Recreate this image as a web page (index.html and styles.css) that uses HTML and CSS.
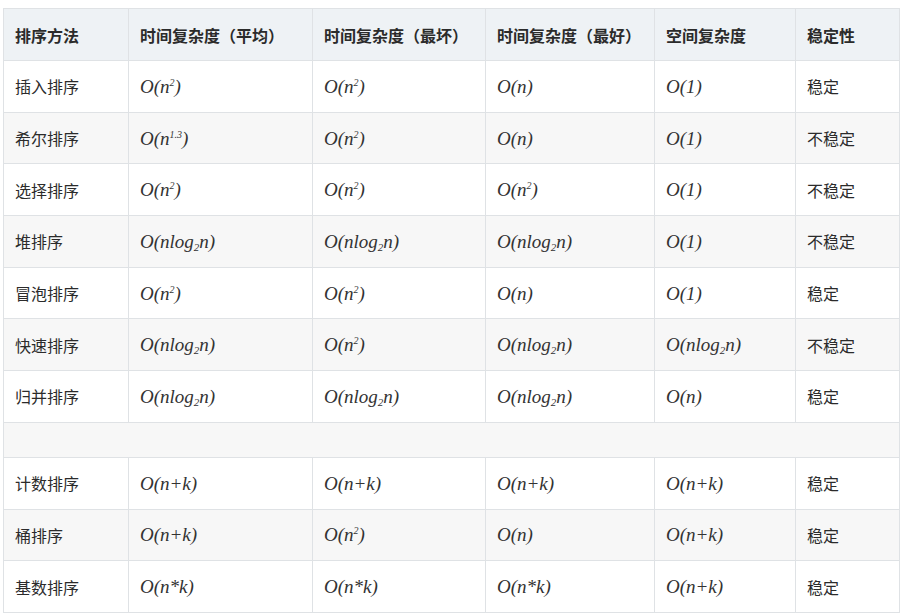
FILE: index.html
```html
<!DOCTYPE html>
<html lang="zh">
<head>
<meta charset="utf-8">
<link rel="stylesheet" href="styles.css">
</head>
<body>
<div class="page">
<table class="sort-table">
  <colgroup>
    <col class="c1"><col class="c2"><col class="c3"><col class="c4"><col class="c5"><col class="c6">
  </colgroup>
  <thead>
    <tr><th>排序方法</th><th>时间复杂度（平均）</th><th>时间复杂度（最坏）</th><th>时间复杂度（最好）</th><th>空间复杂度</th><th>稳定性</th></tr>
  </thead>
  <tbody>
    <tr><td>插入排序</td><td><span class="m">O(n<sup>2</sup>)</span></td><td><span class="m">O(n<sup>2</sup>)</span></td><td><span class="m">O(n)</span></td><td><span class="m">O(1)</span></td><td>稳定</td></tr>
    <tr><td>希尔排序</td><td><span class="m">O(n<sup>1.3</sup>)</span></td><td><span class="m">O(n<sup>2</sup>)</span></td><td><span class="m">O(n)</span></td><td><span class="m">O(1)</span></td><td>不稳定</td></tr>
    <tr><td>选择排序</td><td><span class="m">O(n<sup>2</sup>)</span></td><td><span class="m">O(n<sup>2</sup>)</span></td><td><span class="m">O(n<sup>2</sup>)</span></td><td><span class="m">O(1)</span></td><td>不稳定</td></tr>
    <tr><td>堆排序</td><td><span class="m">O(nlog<sub>2</sub>n)</span></td><td><span class="m">O(nlog<sub>2</sub>n)</span></td><td><span class="m">O(nlog<sub>2</sub>n)</span></td><td><span class="m">O(1)</span></td><td>不稳定</td></tr>
    <tr><td>冒泡排序</td><td><span class="m">O(n<sup>2</sup>)</span></td><td><span class="m">O(n<sup>2</sup>)</span></td><td><span class="m">O(n)</span></td><td><span class="m">O(1)</span></td><td>稳定</td></tr>
    <tr><td>快速排序</td><td><span class="m">O(nlog<sub>2</sub>n)</span></td><td><span class="m">O(n<sup>2</sup>)</span></td><td><span class="m">O(nlog<sub>2</sub>n)</span></td><td><span class="m">O(nlog<sub>2</sub>n)</span></td><td>不稳定</td></tr>
    <tr><td>归并排序</td><td><span class="m">O(nlog<sub>2</sub>n)</span></td><td><span class="m">O(nlog<sub>2</sub>n)</span></td><td><span class="m">O(nlog<sub>2</sub>n)</span></td><td><span class="m">O(n)</span></td><td>稳定</td></tr>
    <tr class="empty"><td colspan="6"></td></tr>
    <tr><td>计数排序</td><td><span class="m">O(n+k)</span></td><td><span class="m">O(n+k)</span></td><td><span class="m">O(n+k)</span></td><td><span class="m">O(n+k)</span></td><td>稳定</td></tr>
    <tr><td>桶排序</td><td><span class="m">O(n+k)</span></td><td><span class="m">O(n<sup>2</sup>)</span></td><td><span class="m">O(n)</span></td><td><span class="m">O(n+k)</span></td><td>稳定</td></tr>
    <tr><td>基数排序</td><td><span class="m">O(n*k)</span></td><td><span class="m">O(n*k)</span></td><td><span class="m">O(n*k)</span></td><td><span class="m">O(n+k)</span></td><td>稳定</td></tr>
  </tbody>
</table>
</div>
</body>
</html>
```

FILE: styles.css
```css
html, body {
  margin: 0;
  padding: 0;
  background: #ffffff;
}

.page {
  padding: 8px 4px 0 3px;
}

.sort-table {
  width: 896px;
  table-layout: fixed;
  border-collapse: collapse;
  font-family: "Noto Sans CJK SC", "Noto Sans", sans-serif;
  font-size: 16px;
  color: #2b2b2b;
}

.c1 { width: 125px; }
.c2 { width: 184px; }
.c3 { width: 173px; }
.c4 { width: 169px; }
.c5 { width: 141px; }
.c6 { width: 104px; }

.sort-table th,
.sort-table td {
  border: 1px solid #dfe2e5;
  padding: 0 10px 0 11px;
  text-align: left;
  vertical-align: middle;
  white-space: nowrap;
  line-height: 20px;
}

.sort-table th {
  font-weight: bold;
  background: #eef2f5;
  height: 51px;
}

.sort-table td {
  font-weight: normal;
  height: 50.7px;
}

.sort-table tbody tr:nth-child(even) td {
  background: #f7f7f7;
}

.sort-table tr.empty td {
  height: 34px;
}

.m {
  font-family: "Liberation Serif", "Times New Roman", serif;
  font-style: italic;
  font-weight: normal;
  font-size: 19px;
  color: #333333;
}

.m sup {
  font-size: 10px;
  vertical-align: 7px;
  line-height: 0;
}

.m sub {
  font-size: 11px;
  vertical-align: -3px;
  line-height: 0;
}
```
